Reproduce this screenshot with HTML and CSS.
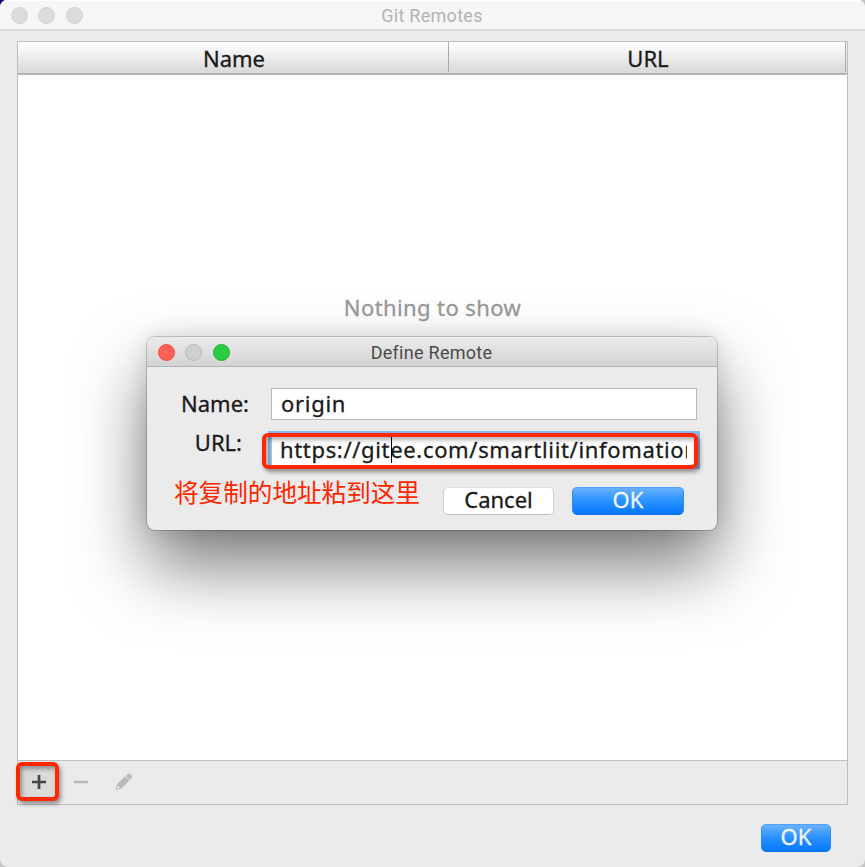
FILE: index.html
```html
<!DOCTYPE html>
<html lang="en">
<head>
<meta charset="utf-8">
<title>Git Remotes</title>
<link rel="stylesheet" href="styles.css">
</head>
<body>
<main class="window">
  <header class="titlebar">
    <div class="lights"><i></i><i></i><i></i></div>
    <span class="title">Git Remotes</span>
  </header>
  <section class="table">
    <div class="thead"><div class="th th-name"><span>Name</span></div><div class="th th-url"><span>URL</span></div></div>
    <div class="tbody"><span class="empty">Nothing to show</span></div>
    <div class="toolbar">
      <div class="tool add"><svg width="14" height="14" viewBox="0 0 14 14"><path d="M7 0V14M0 7H14" stroke="#444" stroke-width="2.7"/></svg></div>
      <div class="tool remove"><svg width="14" height="14" viewBox="0 0 14 14"><path d="M0 7H14" stroke="#b9b9b9" stroke-width="2.5"/></svg></div>
      <div class="tool edit"><svg width="18" height="18" viewBox="0 0 18 18"><path d="M10.6 3.1L13 .9Q14.2 .1 15.4 1.2L16.7 2.5Q17.7 3.6 16.6 4.9L14.7 7Z" fill="#bababa"/><path d="M9.8 3.4L14.4 7.8L6.3 15.6L.6 17.2L1.8 11.4Z" fill="#bababa"/><path d="M2.9 12.6L5 15L2.7 15.7L2 15Z" fill="#ececec"/></svg></div>
    </div>
  </section>
  <footer class="footer"><button class="btn primary main-ok"><span>OK</span></button></footer>
</main>
<section class="dialog">
  <header class="dialog-title">
    <div class="lights active"><i class="red"></i><i></i><i class="green"></i></div>
    <span class="title">Define Remote</span>
  </header>
  <div class="form">
    <label class="label name-label"><span>Name:</span></label>
    <div class="field name-field"><span>origin</span></div>
    <label class="label url-label"><span>URL:</span></label>
    <div class="field url-field"><div class="clip"><span>https://gitee.com/smartliit/infomation</span></div><i class="caret"></i><div class="mark"></div></div>
  </div>
  <div class="actions">
    <span class="note">将复制的地址粘到这里</span>
    <button class="btn cancel"><span>Cancel</span></button>
    <button class="btn primary ok"><span>OK</span></button>
  </div>
</section>
</body>
</html>
```
FILE: styles.css
```css
* { box-sizing: border-box; }
html { background: #c8c8cc; }
body {
  margin: 0;
  width: 865px;
  height: 867px;
  overflow: hidden;
  position: relative;
  background: linear-gradient(135deg, #00007c 8px, #c4c4c4 8px);
  font-family: "Noto Sans", "Noto Sans CJK SC", sans-serif;
  font-size: 22px;
  color: #1a1a1a;
  -webkit-text-stroke: .3px;
}
.window {
  width: 865px;
  height: 867px;
  display: flex;
  flex-direction: column;
  background: #ebebeb;
  border-radius: 7px 7px 8px 8px;
  overflow: hidden;
}
.titlebar {
  height: 31px;
  flex: none;
  display: grid;
  grid-template-columns: 100px 1fr 100px;
  align-items: center;
  background: #f6f6f6;
  border-top: 1px solid #fff;
  border-bottom: 2px solid #dcdcdc;
}
.lights { display: flex; gap: 10.5px; padding-left: 10.5px; }
.lights i {
  width: 17px;
  height: 17px;
  border-radius: 50%;
  background: #dcdcdc;
  border: 1px solid #d0d0d0;
}
.title {
  font: 18px/28px Roboto, sans-serif;
  letter-spacing: .28px;
  color: #b2b2b2;
  text-align: center;
  white-space: nowrap;
  padding: 1px 1px 0 0;
  -webkit-text-stroke: 0;
}
.table {
  flex: none;
  width: 831px;
  height: 764px;
  margin: 10px 0 0 17px;
  border: 1px solid #bebebe;
  display: flex;
  flex-direction: column;
}
.thead {
  height: 33px;
  flex: none;
  display: flex;
  background: linear-gradient(#fff 5%, #ececec 50%, #d8d8d8);
  border-bottom: 2px solid #b3b3b3;
}
.th { display: flex; align-items: center; justify-content: center; border-right: 1px solid #a9a9a9; height: 30px; }
.th span { line-height: 30px; position: relative; top: 1px; left: 1px; }
.th-name { width: 431px; }
.th-url { width: 397px; }
.tbody { flex: 1; background: #fff; text-align: center; padding-top: 217px; }
.empty { line-height: 30px; color: #999; letter-spacing: .4px; }
.toolbar { height: 44px; flex: none; border-top: 1px solid #bebebe; display: flex; align-items: flex-start; }
.tool { display: flex; align-items: center; justify-content: center; height: 39px; margin-top: 1px; }
.tool svg { display: block; }
.add {
  width: 43px;
  margin-left: -2px;
  border: 4px solid #ff2600;
  border-radius: 6px;
  background: #dadada;
  box-shadow: 2px 3px 4px rgba(0,0,0,.4), inset 2px 3px 4px rgba(0,0,0,.35);
}
.add svg { margin-left: 2px; }
.remove { width: 43px; }
.edit { width: 43px; }
.footer { display: flex; justify-content: flex-end; padding: 19px 34px 0 0; }
.btn {
  font: inherit;
  font-size: 22px;
  line-height: 26px;
  height: 28px;
  padding: 0;
  border: 1px solid #cfcfcf;
  border-top-color: #dedede;
  border-bottom-color: #bdbdbd;
  border-radius: 5px;
  background: #fff;
  color: #1a1a1a;
  -webkit-text-stroke: .3px;
}
.btn span { display: block; position: relative; top: -2px; }
.primary {
  color: #f1f6ff;
  border-color: #4ea0fa #2b8dfa #0a6ff5;
  background: linear-gradient(#69b1fb, #2a91ff 50%, #0478ff);
}
.main-ok { width: 70px; }
.dialog {
  position: absolute;
  left: 147px;
  top: 337px;
  width: 570px;
  height: 193px;
  border-radius: 8px;
  background: #ebebeb;
  box-shadow: 0 0 0 1px rgba(0,0,0,.18), 0 36px 70px rgba(0,0,0,.52), 0 0 22px rgba(0,0,0,.12);
}
.dialog-title {
  height: 30px;
  display: grid;
  grid-template-columns: 100px 1fr 100px;
  align-items: center;
  background: linear-gradient(#ebebeb, #d3d3d3);
  border-bottom: 1px solid #b4b4b4;
  border-radius: 8px 8px 0 0;
}
.dialog-title .title { color: #4b4b4b; line-height: 28px; padding-top: 2px; }
.active i { background: #cfcfcf; border-color: #bababa; }
.active .red { background: #ff6058; border-color: #e94d47; }
.active .green { background: #29cc42; border-color: #1fb434; }
.form {
  display: grid;
  grid-template-columns: 102px 426px;
  grid-template-rows: 32px 38px;
  column-gap: 22px;
  row-gap: 10px;
  padding-top: 21px;
}
.label { text-align: right; line-height: 31px; white-space: nowrap; }
.url-label { padding-right: 7px; line-height: 25px; }
.field { background: #fff; border: 1px solid #b8b8b8; }
.name-field { line-height: 28px; padding-left: 9px; letter-spacing: .7px; }
.url-field {
  position: relative;
  height: 32px;
  margin-top: 4px;
  border-color: #c4c4c4;
  box-shadow: 0 0 0 3px #83b9ef;
}
.clip { margin: 0 9px 0 8px; height: 30px; line-height: 28px; overflow: hidden; white-space: nowrap; letter-spacing: .66px; }
.caret { position: absolute; left: 119px; top: 2px; width: 1px; height: 26px; background: #000; }
.mark {
  position: absolute;
  left: -10px;
  top: -2px;
  width: 436px;
  height: 36px;
  border: 4px solid #ff2600;
  border-radius: 6px;
  box-shadow: 2px 3px 4px rgba(0,0,0,.4), inset 2px 3px 4px rgba(0,0,0,.3);
}
.actions { display: flex; padding: 19px 0 0 26px; align-items: flex-start; }
.note { width: 246px; margin-right: 24px; font: 24.6px/36px "Noto Sans CJK SC", sans-serif; color: #ff2600; white-space: nowrap; margin-top: -14px; -webkit-text-stroke: 0; text-indent: 1px; }
.cancel { width: 111px; }
.ok { width: 112px; margin-left: 18px; }
```
